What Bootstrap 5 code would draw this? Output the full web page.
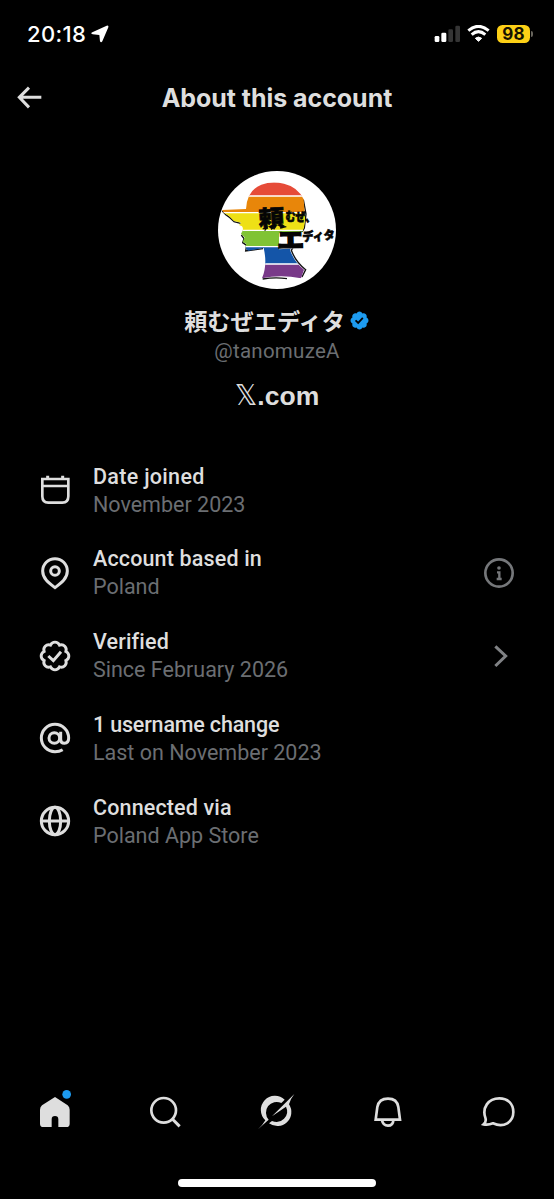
<!DOCTYPE html>
<html lang="en">
<head>
<meta charset="utf-8">
<meta name="viewport" content="width=device-width, initial-scale=1">
<title>About this account</title>
<link href="https://cdn.jsdelivr.net/npm/bootstrap@5.3.0/dist/css/bootstrap.min.css" rel="stylesheet">
<style>
body{background:#000;color:#dedede;font-family:Roboto,"Noto Sans CJK JP",sans-serif;min-height:1199px;overflow:hidden}
svg{display:block;flex:none}
.ln{fill:none;stroke:#dedede;stroke-width:9}
.fl{fill:#dedede}
.statusbar{height:68px;padding:0 21px 0 27px;color:#fff}
.clock{font:500 22px/28px Inter,sans-serif;letter-spacing:.35px}
.wifi{margin:0 7px 0 6px}
.batt{width:33px;height:18px;border-radius:5.5px;background:#fdd016;color:#161200;font:700 17px/18px Inter,sans-serif;text-align:center;letter-spacing:.2px}
.battcap{width:2px;height:6px;border-radius:0 2px 2px 0;background:#68655d;margin-left:1px}
.topbar{height:60px}
.topbar h1{font:700 25px/30px Inter,sans-serif;margin:0;letter-spacing:-.05px}
.back{left:12px;top:12px}
.profile{padding-top:43px;height:321.3px}
.avatar{overflow:visible}
.name{font:700 23.2px/30px "Noto Sans CJK JP",sans-serif;margin-top:16px}
.handle{font-size:20.5px;line-height:26px;color:#6b6e72;letter-spacing:.25px;margin-top:3px}
.site{font:700 26.5px/32px "Liberation Sans",sans-serif;margin-top:16px}
.site .dx{font:400 28px/32px "DejaVu Sans",sans-serif}
.info-row{height:82.75px;padding:0 37.5px 0 37px}
.info-row svg{margin-top:-1px}
.ttl{font-size:21.5px;line-height:28px;font-weight:500;white-space:nowrap;letter-spacing:.15px}
.ttl-wide{letter-spacing:.3px}
.ttl-tight{letter-spacing:-.18px}
.sub{font-size:21.5px;line-height:28px;color:#6b6e72;white-space:nowrap}
.texts{margin-left:20px}
.tabs{height:87px}
.homebar{width:198px;height:8px;border-radius:4px;background:#fff;margin:0 auto 12px}
</style>
</head>
<body class="d-flex flex-column">
<header>
<div class="statusbar d-flex align-items-center">
 <span class="clock">20:18</span>
 <svg class="ms-1" width="20" height="20" viewBox="272 43 60 60" fill="#fff"><path d="M322 48q7-2 5 5l-18 42q-4 6-7 0l-2-19-20-2q-8-2-1-6z"/></svg>
 <div class="ms-auto d-flex align-items-center">
  <svg width="27" height="18" viewBox="101 46 81 54"><g fill="#fff"><rect x="103" y="79" width="14" height="18" rx="4"/><rect x="123" y="69" width="15" height="28" rx="4"/></g><g fill="#353535"><rect x="144" y="59" width="14" height="38" rx="4"/><rect x="165" y="48" width="14" height="49" rx="4"/></g></svg>
  <svg class="wifi" width="23" height="18" viewBox="200 45 69 54" fill="none" stroke="#fff" stroke-width="9"><path d="M204 62Q234 36 265 62M214 74Q234 56 255 74"/><path d="M225 85Q234 77 244 85L234.500 94z" fill="#fff" stroke-width="3"/></svg>
  <span class="batt">98</span><span class="battcap"></span>
 </div>
</div>
<div class="topbar position-relative d-flex align-items-center justify-content-center">
 <a class="back position-absolute" href="#" aria-label="Back"><svg width="36" height="36" viewBox="36 210 108 108" class="ln"><path d="M124 262H58M87 233L58 262L87 292"/></svg></a>
 <h1>About this account</h1>
</div>
</header>
<main>
<section class="profile d-flex flex-column align-items-center">
 <svg class="avatar" width="118" height="118" viewBox="24 19 354 354" role="img" aria-label="Profile picture">
  <defs><clipPath id="head"><path d="M36 136L108 133Q111 77 154 60Q185 49 222 57Q264 67 281 104L284 145Q289 180 273 210Q247 238 240 256Q254 294 282 315L273 341Q212 329 156 341Q173 301 161 250L116 258Q103 253 109 237L98 232L104 218L93 207Q103 194 96 185L87 181L94 174L72 169Q60 153 42 145z"/></clipPath></defs>
  <circle cx="201" cy="196" r="177" fill="#fff"/>
  <path d="M37 139L46 149Q61 158 72 171L92 176M94 211L102 222L98 234L110 242L107 259L159 252M280 105L288 148L283 190L244 257Q257 292 287 315L276 337M158 343Q196 337 231 342" fill="none" stroke="#111" stroke-width="4"/>
  <g clip-path="url(#head)"><path fill="#e64b38" d="M24 40h300v54H24z"/><path fill="#e8860a" d="M24 94h300v50H24z"/><path fill="#eee016" d="M24 144h300v53H24z"/><path fill="#80c334" d="M24 197h300v49H24z"/><path fill="#1455a8" d="M24 246h300v52H24z"/><path fill="#793989" d="M24 298h300v50H24z"/><path d="M24 94H330M24 144H330M24 197H330M24 246H330M24 298H330" stroke="#fff" stroke-width="4"/></g>
  <path d="M158 193L171 188L164 198M183 194L198 184L191 194M210 190L229 186" fill="none" stroke="#111" stroke-width="4"/>
  <path d="M207 206L282 202L283 249L207 254z" fill="#fff"/>
  <g font-family="'Noto Sans CJK JP',sans-serif" font-weight="900" fill="#050505" stroke="#050505" stroke-width="2">
   <text transform="translate(147 187) rotate(-3)" font-size="68" textLength="77" lengthAdjust="spacingAndGlyphs">頼</text>
   <text transform="translate(226 169) rotate(2)" font-size="38" textLength="90" lengthAdjust="spacingAndGlyphs">むぜ、</text>
   <text transform="translate(202 251) rotate(-1)" font-size="66" textLength="81" lengthAdjust="spacingAndGlyphs" stroke-width="4">エ</text>
   <text transform="translate(278 230) rotate(-4)" font-size="36" textLength="97" lengthAdjust="spacingAndGlyphs">ディタ</text>
  </g>
 </svg>
 <div class="name d-flex align-items-center"><span>頼むぜエディタ</span><svg class="ms-1" width="21" height="21" viewBox="0 0 24 24" fill="#1d9bf0"><path d="M22.250 12c0-1.430-.88-2.670-2.190-3.340.46-1.390.2-2.900-.81-3.910s-2.520-1.270-3.910-.81c-.66-1.310-1.910-2.190-3.340-2.190s-2.670.88-3.330 2.190c-1.400-.46-2.910-.2-3.920.81s-1.260 2.520-.8 3.910c-1.310.67-2.200 1.910-2.200 3.340s.89 2.670 2.200 3.340c-.46 1.390-.21 2.900.8 3.910s2.520 1.260 3.910.81c.67 1.310 1.910 2.190 3.340 2.190s2.680-.88 3.340-2.190c1.390.45 2.900.2 3.910-.81s1.270-2.520.81-3.910c1.310-.67 2.190-1.910 2.190-3.340z"/><path d="M7.500 11.800l3 3 5.300-5.800" fill="none" stroke="#000" stroke-width="2"/></svg></div>
 <div class="handle">@tanomuzeA</div>
 <div class="site"><span class="dx">𝕏</span>.com</div>
</section>
<section>
 <div class="info-row d-flex align-items-center">
  <svg class="ln" width="36" height="36" viewBox="50 51 108 108"><path d="M66 72H144V124Q144 143 126 143H84Q66 143 66 124zM66 93H144" stroke-width="8"/><path d="M82 62V72M127 62V72"/></svg>
  <div class="texts"><div class="ttl ttl-wide">Date joined</div><div class="sub">November 2023</div></div>
 </div>
 <div class="info-row d-flex align-items-center">
  <svg class="ln" width="36" height="36" viewBox="50 299 108 108"><path d="M104 397C88 385 67 371 67 347A37 37 0 0 1 141 347C141 371 120 385 104 397z"/><circle cx="104" cy="347" r="13"/></svg>
  <div class="texts"><div class="ttl">Account based in</div><div class="sub">Poland</div></div>
  <svg class="ms-auto" width="36" height="36" viewBox="33 29 108 108"><circle cx="87" cy="83" r="41" fill="none" stroke="#75777a" stroke-width="8"/><path d="M81 81H88V101M80 101H95" fill="none" stroke="#75777a" stroke-width="7"/><circle cx="87" cy="68" r="5.500" fill="#75777a"/></svg>
 </div>
 <div class="info-row d-flex align-items-center">
  <svg class="ln" width="36" height="36" viewBox="50 53 108 108"><path transform="translate(104 107) scale(4.050) translate(-12 -12)" stroke-width="2.150" d="M22.250 12c0-1.430-.88-2.670-2.190-3.340.46-1.390.2-2.900-.81-3.910s-2.520-1.270-3.910-.81c-.66-1.310-1.910-2.190-3.340-2.190s-2.670.88-3.330 2.190c-1.400-.46-2.910-.2-3.920.81s-1.260 2.520-.8 3.910c-1.310.67-2.200 1.910-2.200 3.340s.89 2.670 2.200 3.340c-.46 1.390-.21 2.900.8 3.910s2.520 1.260 3.910.81c.67 1.310 1.910 2.190 3.340 2.190s2.680-.88 3.340-2.190c1.390.45 2.900.2 3.910-.81s1.270-2.520.81-3.910c1.310-.67 2.190-1.910 2.190-3.340z"/><path d="M84 107L99 121L122 94"/></svg>
  <div class="texts"><div class="ttl">Verified</div><div class="sub">Since February 2026</div></div>
  <svg class="ms-auto" width="36" height="36" viewBox="33 277 108 108"><path d="M76 302L107 331L76 361" fill="none" stroke="#808285" stroke-width="9"/></svg>
 </div>
 <div class="info-row d-flex align-items-center">
  <svg class="ln" width="36" height="36" viewBox="50 301 108 108"><circle cx="102" cy="355" r="16"/><path d="M121 336V359Q121 371 132 371Q145 370 145 355A41 41 0 1 0 104 396Q117 396 127 390"/></svg>
  <div class="texts"><div class="ttl ttl-tight">1 username change</div><div class="sub">Last on November 2023</div></div>
 </div>
 <div class="info-row d-flex align-items-center">
  <svg class="ln" width="36" height="36" viewBox="50 39 108 108"><circle cx="104" cy="93" r="41"/><ellipse cx="104" cy="93" rx="17" ry="41"/><path d="M63 93H145"/></svg>
  <div class="texts"><div class="ttl">Connected via</div><div class="sub">Poland App Store</div></div>
 </div>
</section>
</main>
<footer class="mt-auto">
<nav class="tabs row row-cols-5 g-0">
 <a class="col d-flex justify-content-center" href="#" aria-label="Home"><svg width="40" height="40" viewBox="46 36 120 120" overflow="visible"><path class="fl" d="M106 51L144 76Q150 81 150 89V131Q150 141 140 141H116V118A10 10 0 0 0 96 118V141H71Q61 141 61 131V89Q61 81 67 76z"/><circle cx="141" cy="43" r="13" fill="#1d9bf0"/></svg></a>
 <a class="col d-flex justify-content-center" href="#" aria-label="Search"><svg class="ln" width="40" height="40" viewBox="379 36 120 120"><circle cx="432" cy="91" r="37" stroke-width="8"/><path d="M458 117L480 139"/></svg></a>
 <a class="col d-flex justify-content-center" href="#" aria-label="Grok"><svg width="40" height="40" viewBox="51 36 120 120" overflow="visible"><path class="fl" d="M134 59A42 42 0 0 0 76 121Q69 134 54 148L86 119A32 32 0 0 1 124 69zM87 130A42 42 0 0 0 147 73Q151 57 163 42L96 109L138 80A32 32 0 0 1 96 123z"/></svg></a>
 <a class="col d-flex justify-content-center" href="#" aria-label="Notifications"><svg class="ln" width="40" height="40" viewBox="383 36 120 120"><path d="M406 119L411 81Q416 56 443 56T474 81L479 119zM425 121Q428 137 443 137T459 121" stroke-width="8"/></svg></a>
 <a class="col d-flex justify-content-center" href="#" aria-label="Messages"><svg class="ln" width="40" height="40" viewBox="716 36 120 120"><path d="M730 133Q739 125 735 113C725 84 743 55 777 55C803 55 819 72 819 96C819 126 791 145 758 130Q743 136 730 133z" stroke-width="8"/></svg></a>
</nav>
<div class="homebar"></div>
</footer>
<script src="https://cdn.jsdelivr.net/npm/bootstrap@5.3.0/dist/js/bootstrap.bundle.min.js"></script>
</body>
</html>
